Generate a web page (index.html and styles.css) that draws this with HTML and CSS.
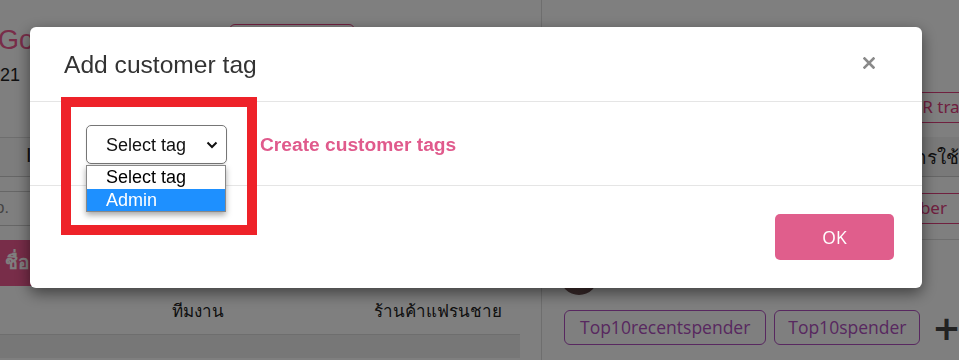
FILE: index.html
```html
<!DOCTYPE html>
<html>
<head>
<meta charset="utf-8">
<link rel="stylesheet" href="styles.css">
</head>
<body>
<div class="page">
  <div class="main">
    <div class="title-row">
      <div class="shop-name">Go</div>
      <div class="outline-btn top-btn"></div>
    </div>
    <div class="date">21</div>
    <div class="tabs"><span class="tab-mark">I</span></div>
    <div class="gap-row"></div>
    <div class="search-row"><span class="search-ph">lo.</span></div>
    <div class="thead"><span class="th">ชื่อ</span></div>
    <div class="trow">
      <span class="cell team">ทีมงาน</span>
      <span class="cell shop">ร้านค้าแฟรนชาย</span>
    </div>
    <div class="trow2"></div>
  </div>
  <div class="side">
    <div class="side-top"><span class="outline-btn side-btn">QR transaction</span></div>
    <div class="side-head">ประวัติการใช้</div>
    <div class="side-search"><span class="outline-btn side-btn2">Member</span></div>
    <div class="side-user"><span class="avatar"></span></div>
    <div class="tags">
      <span class="tag">Top10recentspender</span>
      <span class="tag tag-wide">Top10spender</span>
      <span class="plus">+</span>
    </div>
  </div>
</div>

<div class="backdrop"></div>

<div class="modal">
  <div class="modal-header">
    <h4 class="modal-title">Add customer tag</h4>
    <span class="close">
      <svg width="12" height="12" viewBox="0 0 12 12"><path d="M1.5 1.5 L10.5 10.5 M10.5 1.5 L1.5 10.5" stroke="#8a8a8a" stroke-width="2.6" stroke-linecap="square"/></svg>
    </span>
  </div>
  <div class="modal-body">
    <div class="select-wrap">
      <div class="select">
        <span>Select tag</span>
        <svg class="chev" width="12" height="8" viewBox="0 0 12 8"><path d="M1.5 1.5 L6 6 L10.5 1.5" fill="none" stroke="#111" stroke-width="2"/></svg>
      </div>
      <div class="dropdown">
        <div class="opt">Select tag</div>
        <div class="opt sel">Admin</div>
      </div>
    </div>
    <a class="create-link">Create customer tags</a>
  </div>
  <div class="modal-footer">
    <button class="ok">OK</button>
  </div>
  <div class="highlight"></div>
</div>
</body>
</html>
```

FILE: styles.css
```css
* { box-sizing: border-box; }
html, body { margin: 0; padding: 0; }
body {
  width: 959px;
  height: 360px;
  overflow: hidden;
  background: #ffffff;
  font-family: "Liberation Sans", Arial, sans-serif;
  color: #333;
}
.page {
  display: flex;
  height: 360px;
}
.main {
  width: 541px;
  flex-shrink: 0;
  display: flex;
  flex-direction: column;
}
.title-row {
  display: flex;
  align-items: flex-start;
  height: 54px;
  padding-top: 24px;
}
.shop-name {
  font-size: 27px;
  color: #f05a92;
  line-height: 32px;
  margin-left: -2px;
  width: 231px;
}
.outline-btn {
  border: 1px solid #e0407e;
  border-radius: 6px;
  color: #e0407e;
}
.top-btn { width: 126px; height: 34px; }
.date {
  font-size: 18px;
  line-height: 22px;
  color: #222;
  height: 56px;
  padding-top: 10px;
}
.tabs {
  height: 40px;
  margin-top: 27px;
  background: #fafafa;
  border-top: 1px solid #ddd;
  border-bottom: 1px solid #ccc;
  padding: 6px 0 0 26px;
}
.tab-mark { font-size: 20px; color: #222; }
.gap-row { height: 15px; border-bottom: 1px solid #ccc; }
.search-row {
  height: 34px;
  border-bottom: 1px solid #ccc;
  padding: 7px 0 0 0;
}
.search-ph { font-size: 16px; color: #888; margin-left: -8px; }
.thead {
  margin-top: 14px;
  height: 46px;
  background: #f05a92;
  padding: 7px 0 0 5px;
}
.th { color: #fff; font-weight: bold; font-size: 19px; font-family: "Noto Sans", "DejaVu Sans", sans-serif; }
.trow {
  height: 49px;
  display: flex;
  align-items: center;
  border-bottom: 1px solid #ddd;
  width: 520px;
  font-family: "Noto Sans", "DejaVu Sans", sans-serif;
  font-size: 17px;
  color: #222;
}
.team { margin-left: 172px; }
.shop { margin-left: auto; margin-right: 18px; }
.trow2 { width: 520px; height: 23px; background: #eeeeee; }

.side {
  flex: 1;
  min-width: 0;
  border-left: 1px solid #ddd;
  display: flex;
  flex-direction: column;
  padding-left: 22px;
  font-family: "Noto Sans", "DejaVu Sans", sans-serif;
}
.side-top { height: 137px; padding-top: 92px; display: flex; justify-content: flex-end; }
.side-btn { width: 100px; height: 31px; font-size: 17px; padding: 2px 8px; white-space: nowrap; overflow: hidden; margin-right: -41px; flex-shrink: 0; }
.side-head {
  height: 40px;
  background: #f3f3f3;
  border-bottom: 1px solid #ccc;
  margin-left: -22px;
  font-size: 19px;
  color: #222;
  text-align: right;
  padding: 5px 0 0 0;
  white-space: nowrap;
  overflow: hidden;
  direction: rtl;
}
.side-search { height: 63px; border-bottom: 1px solid #ddd; margin-left: -22px; display: flex; justify-content: flex-end; padding-top: 16px; }
.side-btn2 { width: 120px; height: 31px; font-size: 17px; padding: 2px 8px; margin-right: -31px; flex-shrink: 0; }
.side-user { height: 70px; padding: 17px 0 0 0; }
.avatar {
  display: block;
  width: 38px;
  height: 38px;
  border-radius: 50%;
  background: radial-gradient(circle at 40% 30%, #c9a080, #7a5a5a 60%, #553a40);
  margin-left: -4px;
}
.tags { display: flex; align-items: center; gap: 8px; }
.tag {
  border: 1px solid #b050c0;
  border-radius: 6px;
  color: #b050c0;
  font-family: "Open Sans", sans-serif;
  font-size: 17.5px;
  height: 35px;
  line-height: 33px;
  padding: 0 15px;
  flex-shrink: 0;
  white-space: nowrap;
}
.tag-wide { width: 146px; padding: 0; text-align: center; }
.plus { font-size: 34px; font-weight: bold; color: #444; margin-left: 4px; font-family: "DejaVu Sans", sans-serif; line-height: 30px; flex-shrink: 0; }

.backdrop {
  position: fixed;
  inset: 0;
  background: rgba(0, 0, 0, 0.5);
}
.modal {
  position: fixed;
  left: 30px;
  top: 27px;
  width: 892px;
  height: 261px;
  background: #fff;
  border-radius: 6px;
  box-shadow: 0 5px 15px rgba(0, 0, 0, 0.5);
  display: flex;
  flex-direction: column;
}
.modal-header {
  height: 75px;
  border-bottom: 1px solid #e5e5e5;
  display: flex;
  align-items: center;
  padding: 0 47px 0 34px;
  justify-content: space-between;
}
.modal-title {
  margin: 0;
  font-weight: normal;
  font-size: 24.6px;
  color: #333;
  margin-top: 2px;
}
.close { display: flex; margin-top: -3px; }
.modal-body {
  height: 84px;
  border-bottom: 1px solid #e5e5e5;
  display: flex;
  align-items: flex-start;
  padding: 23px 0 0 56px;
}
.select-wrap { position: relative; }
.select {
  width: 141px;
  height: 39px;
  border: 1px solid #767676;
  border-radius: 5px;
  display: flex;
  align-items: center;
  padding: 1px 0 0 19px;
  font-size: 18px;
  color: #111;
  box-shadow: 0 1px 2px rgba(0,0,0,0.1);
}
.chev { margin-left: auto; margin-right: 8px; }
.dropdown {
  position: absolute;
  left: 0;
  top: 40px;
  width: 140px;
  border: 1px solid #888;
  background: #fff;
  box-shadow: 0 3px 6px rgba(0,0,0,0.35);
  z-index: 2;
}
.opt {
  height: 23px;
  line-height: 22px;
  font-size: 18px;
  padding-left: 19px;
  color: #000;
}
.opt.sel { background: #1e90ff; color: #fff; height: 22px; }
.create-link {
  font-size: 19.2px;
  font-weight: bold;
  color: #e05a8c;
  margin-left: 33px;
  margin-top: 9px;
}
.modal-footer {
  flex: 1;
  display: flex;
  justify-content: flex-end;
  align-items: flex-start;
  padding: 28px 28px 0 0;
}
.ok {
  width: 119px;
  height: 46px;
  background: #e05e8c;
  color: #fff;
  border: none;
  border-radius: 5px;
  font-family: "Open Sans", sans-serif;
  font-size: 17.5px;
}
.highlight {
  position: absolute;
  left: 31px;
  top: 70px;
  width: 196px;
  height: 138px;
  border: 10px solid #ee2229;
  pointer-events: none;
}
```
